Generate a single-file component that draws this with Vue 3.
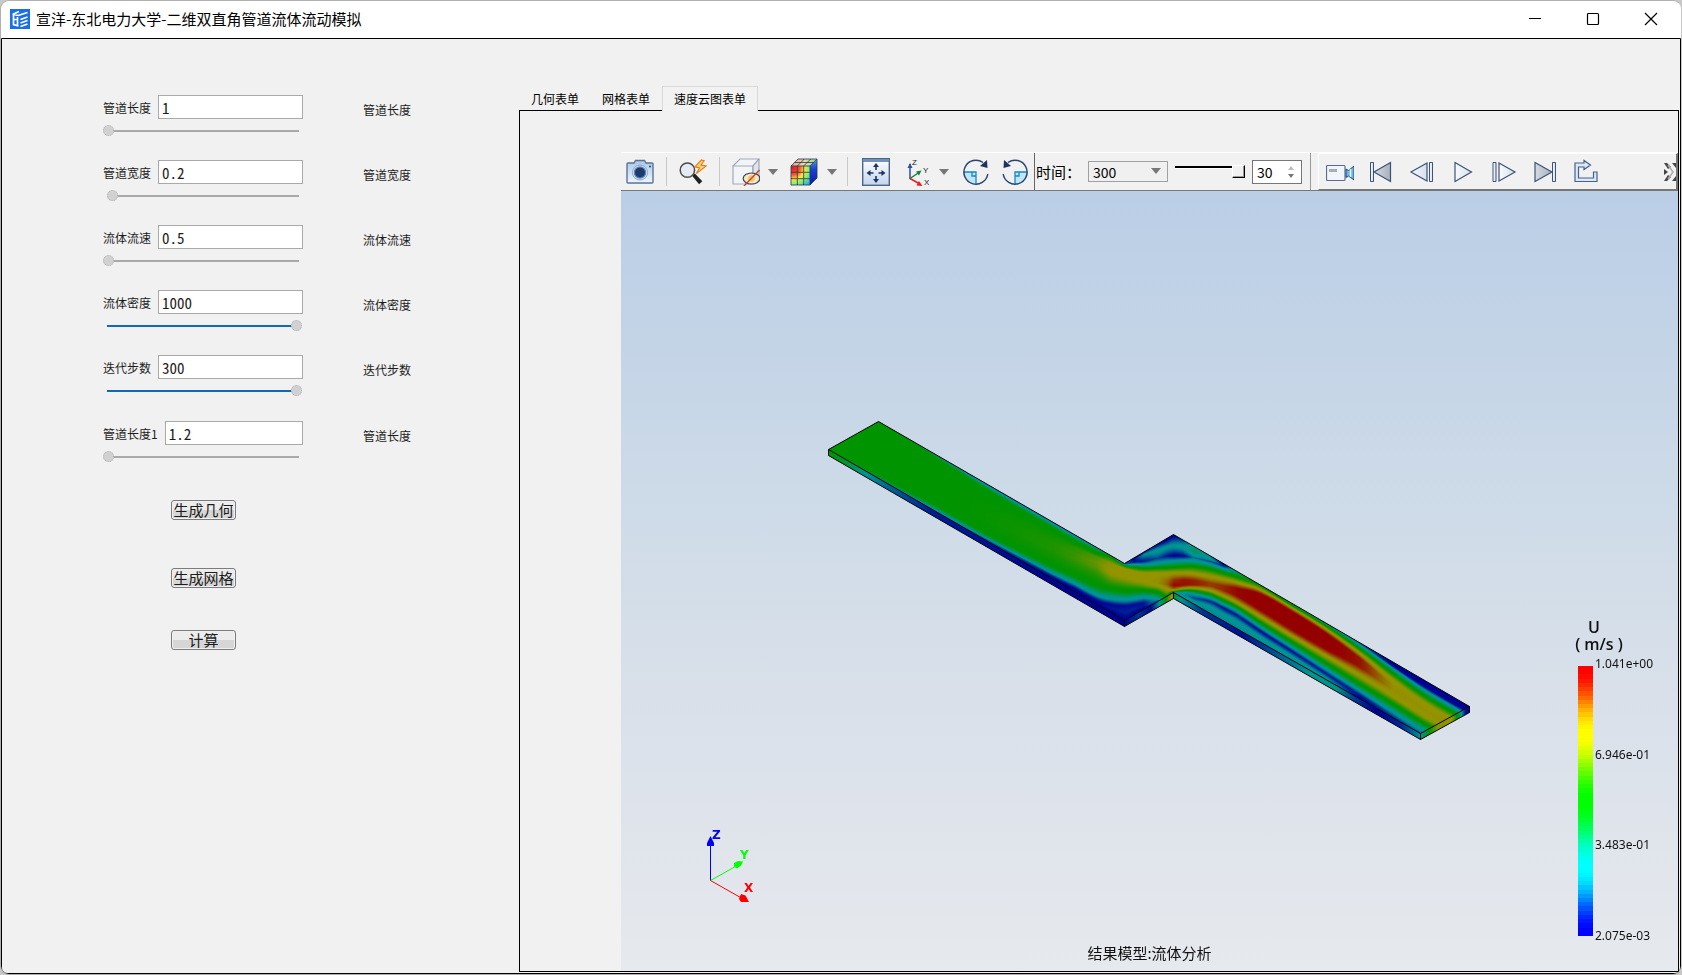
<script setup>
import { onMounted, ref } from 'vue'

const params = ref([
  { id: 'length', label: '管道长度', hint: '管道长度', value: '1', pos: 0 },
  { id: 'width', label: '管道宽度', hint: '管道宽度', value: '0.2', pos: 2 },
  { id: 'speed', label: '流体流速', hint: '流体流速', value: '0.5', pos: 0 },
  { id: 'density', label: '流体密度', hint: '流体密度', value: '1000', pos: 100 },
  { id: 'steps', label: '迭代步数', hint: '迭代步数', value: '300', pos: 100 },
  { id: 'length1', label: '管道长度1', hint: '管道长度', value: '1.2', pos: 0 },
])
const tabs = ['几何表单', '网格表单', '速度云图表单']
const activeTab = ref(2)
const time = ref('300')
const frame = ref('30')
const ticks = ['1.041e+00', '6.946e-01', '3.483e-01', '2.075e-03']

/* Rainbow scale: blue, cyan, green, yellow, red */
const scale = [[0, 0, 1], [0, 1, 1], [0, 1, 0], [1, 1, 0], [1, 0, 0]]
function colour(t, peak) {
  const p = Math.min(Math.max(t, 0), 1) * 4
  const i = Math.min(Math.floor(p), 3)
  const x = p - i
  const f = x * x * (3 - 2 * x)
  return scale[i].map((c, k) => Math.round((c + (scale[i + 1][k] - c) * f) * peak))
}
const bands = Array.from({ length: 64 }, (_, i) => ({ y: i, fill: `rgb(${colour(1 - i / 63, 255).join(',')})` }))

/* Velocity profiles across the duct: station, node positions, node levels */
const profiles = [
  [-844, [-381, -380, -379, -378, -370, -330, -300, -280, -250, -225, -218, -215, -213, -211], [.5, .5, .5, .5, .5, .5, .5, .5, .5, .5, .5, .5, .5, .49]],
  [-630, [-258, -257, -256, -255, -248, -200, -180, -150, -120, -103, -96, -92, -90, -88], [.48, .5, .5, .5, .5, .5, .5, .5, .5, .5, .42, .36, .34, .3]],
  [-520, [-195, -194, -192, -188, -182, -140, -110, -80, -60, -44, -35, -30, -27, -24], [.3, .32, .36, .45, .5, .5, .5, .5, .5, .5, .36, .28, .22, .2]],
  [-370, [-108, -105, -102, -97, -88, -50, -20, 0, 20, 40, 50, 54, 58, 62], [.22, .25, .3, .42, .5, .52, .53, .53, .52, .5, .35, .25, .15, .1]],
  [-170, [7, 10, 14, 18, 28, 50, 70, 90, 115, 138, 155, 163, 169, 177], [.2, .25, .3, .4, .5, .55, .57, .57, .54, .5, .32, .2, .08, 0]],
  [-110, [42, 44, 48, 52, 60, 80, 100, 115, 138, 165, 188, 199, 205, 212], [.22, .25, .3, .4, .5, .58, .6, .6, .56, .5, .25, .07, 0, 0]],
  [-40, [82, 84, 88, 92, 98, 110, 128, 142, 165, 195, 224, 239, 246, 252], [.25, .3, .4, .45, .5, .63, .66, .64, .57, .5, .25, .04, .02, 0]],
  [0, [105, 106, 107, 109, 113, 128, 145, 160, 180, 205, 234, 251, 263, 275], [.35, .4, .45, .5, .56, .7, .74, .72, .62, .5, .25, .04, .06, 0]],
  [43, [130, 131, 132, 133, 135, 145, 158, 170, 190, 211, 237, 256, 275, 300], [.15, .2, .25, .35, .5, .74, .76, .74, .62, .5, .25, .04, .08, 0]],
  [70, [114, 118, 125, 132, 140, 153, 164, 176, 194, 210, 235, 252, 266, 284], [.02, .04, .05, .25, .5, .74, .76, .75, .62, .5, .25, .04, .08, 0]],
  [100, [97, 103, 122, 133, 143, 158, 170, 182, 197, 209, 230, 246, 256, 267], [.1, .22, .06, .25, .5, .74, .76, .75, .64, .5, .25, .05, .06, 0]],
  [140, [73, 90, 114, 129, 142, 158, 175, 188, 199, 207, 222, 232, 238, 245], [.05, .26, .12, .25, .5, .75, .77, .78, .7, .6, .4, .3, .2, .1]],
  [170, [56, 80, 107, 124, 141, 158, 178, 192, 203, 212, 218, 221, 224, 227], [0, .25, .06, .25, .5, .75, .83, .85, .78, .7, .65, .6, .55, .5]],
  [190, [44, 76, 106, 122, 140, 157, 178, 195, 205, 210, 213, 215, 216, 217], [0, .25, .02, .25, .5, .75, .9, .96, .85, .7, .5, .3, .3, .3]],
  [220, [61, 80, 107, 120, 138, 157, 178, 194, 204, 210, 215, 221, 227, 233], [.12, .27, .04, .25, .5, .75, .94, .95, .75, .5, .25, .22, .25, .25]],
  [250, [79, 92, 112, 121, 137, 159, 180, 193, 203, 211, 219, 232, 244, 251], [.3, .36, .17, .25, .5, .75, .93, .93, .75, .5, .27, .12, .25, .2]],
  [300, [108, 116, 123, 131, 145, 168, 188, 197, 211, 222, 233, 243, 260, 279], [.2, .27, .12, .25, .5, .75, .89, .89, .75, .5, .25, .08, .25, .2]],
  [340, [131, 134, 138, 145, 157, 176, 196, 210, 227, 240, 252, 263, 282, 303], [.02, .05, .1, .25, .5, .75, .91, .92, .75, .5, .25, .05, .25, .2]],
  [380, [154, 155, 156, 158, 169, 186, 204, 226, 247, 260, 272, 285, 303, 326], [.3, .3, .33, .36, .5, .75, .97, .97, .75, .5, .25, .06, .25, .2]],
  [450, [194, 195, 196, 197, 200, 208, 222, 266, 289, 306, 320, 332, 350, 366], [.45, .5, .52, .55, .6, .75, 1, 1, .75, .5, .25, .04, .25, .22]],
  [550, [252, 253, 254, 255, 258, 265, 278, 328, 350, 368, 384, 396, 412, 424], [.35, .38, .42, .45, .5, .75, 1, 1, .75, .5, .25, .05, .25, .27]],
  [650, [310, 311, 312, 313, 318, 328, 342, 385, 408, 430, 448, 461, 474, 482], [.3, .32, .35, .4, .5, .75, 1, 1, .75, .5, .25, .06, .22, .27]],
  [750, [368, 370, 372, 376, 386, 400, 415, 440, 466, 492, 512, 524, 532, 539], [.1, .15, .2, .28, .5, .75, .94, .94, .75, .5, .25, .07, .03, .02]],
  [850, [425, 430, 438, 446, 460, 480, 497, 510, 528, 552, 575, 585, 590, 597], [0, 0, .03, .25, .5, .74, .78, .78, .75, .5, .25, .15, .1, .08]],
  [950, [483, 492, 503, 514, 530, 552, 566, 580, 592, 614, 636, 645, 650, 655], [0, 0, .03, .25, .5, .74, .77, .77, .74, .5, .25, .2, .15, .1]],
  [1078, [557, 568, 578, 588, 604, 624, 637, 647, 660, 680, 700, 710, 720, 730], [0, 0, .03, .25, .5, .74, .77, .77, .74, .5, .25, .2, .15, .1]],
]

function slope(i, part, k) {
  const a = profiles[Math.max(i - 1, 0)]
  const b = profiles[Math.min(i + 1, profiles.length - 1)]
  return (b[part][k] - a[part][k]) / (b[0] - a[0])
}

/* One column of the field at station u: smooth node positions and levels */
function column(u) {
  let i = 0
  while (i < profiles.length - 2 && profiles[i + 1][0] < u) i++
  const a = profiles[i]
  const b = profiles[i + 1]
  const h = b[0] - a[0]
  const f = Math.min(Math.max((u - a[0]) / h, 0), 1)
  const f2 = f * f
  const f3 = f2 * f
  const pos = a[1].map((p, k) =>
    (2 * f3 - 3 * f2 + 1) * p + (f3 - 2 * f2 + f) * h * slope(i, 1, k)
    + (3 * f2 - 2 * f3) * b[1][k] + (f3 - f2) * h * slope(i + 1, 1, k))
  const lev = a[2].map((l, k) => l + (b[2][k] - l) * f)
  return { pos, lev }
}

function level({ pos, lev }, v) {
  if (v <= pos[0]) return lev[0]
  for (let k = 1; k < pos.length; k++) {
    if (v <= pos[k]) return lev[k - 1] + (lev[k] - lev[k - 1]) * ((v - pos[k - 1]) / (pos[k] - pos[k - 1] || 1))
  }
  return lev[lev.length - 1]
}

const field = ref(null)
const A = [207, 258], B = [257, 230], C = [503, 372], D = [552, 343]
const E = [848, 515], F = [799, 542], G = [552, 401], H = [503, 429]
const depth = 6
const walls = [
  { from: A, to: H, stops: [[0, .5], [.06, .4], [.13, .25], [.2, .16], [.35, .07], [.55, .05], [.8, 0], [1, 0]] },
  { from: H, to: G, stops: [[0, 0], [.3, .1], [.55, .03], [.72, .25], [.86, .5], [.96, .75], [1, .72]] },
  { from: G, to: F, stops: [[0, .45], [.03, .27], [.12, .1], [.28, .05], [.42, .14], [.55, .25], [.66, .3], [.74, .1], [.82, 0], [.92, .08], [1, .22]] },
  { from: F, to: E, stops: [[0, .25], [.2, .48], [.35, .7], [.65, .74], [.75, .5], [.85, .25], [.93, .05], [1, .02]] },
]

function trace(ctx, points) {
  ctx.beginPath()
  points.forEach(([x, y], i) => (i ? ctx.lineTo(x + .5, y + .5) : ctx.moveTo(x + .5, y + .5)))
}

onMounted(() => {
  const ctx = field.value.getContext('2d')
  const face = document.createElement('canvas')
  face.width = 650
  face.height = 320
  const fctx = face.getContext('2d')
  const img = fctx.createImageData(650, 320)
  for (let x = 0; x < 650; x++) {
    const col = column((x + 205 - 489) * 3)
    for (let y = 0; y < 320; y++) {
      const [r, g, b] = colour(level(col, (y + 228 - 329) * 3), 148)
      img.data.set([r, g, b, 255], (y * 650 + x) * 4)
    }
  }
  fctx.putImageData(img, 0, 0)

  ctx.save()
  trace(ctx, [A, B, C, D, E, F, G, H])
  ctx.closePath()
  ctx.clip()
  ctx.drawImage(face, 205, 228)
  ctx.restore()

  ctx.lineWidth = 1
  ctx.strokeStyle = '#000'
  walls.forEach(({ from, to, stops }) => {
    const grad = ctx.createLinearGradient(from[0], 0, to[0], 0)
    stops.forEach(([p, t]) => grad.addColorStop(p, `rgb(${colour(t, 148).join(',')})`))
    trace(ctx, [from, to, [to[0], to[1] + depth], [from[0], from[1] + depth]])
    ctx.closePath()
    ctx.fillStyle = grad
    ctx.fill()
    ctx.stroke()
  })
  trace(ctx, [A, B, C, D, E])
  ctx.stroke()
})
</script>

<template>
  <div class="window">
    <header class="titlebar">
      <svg class="logo" viewBox="0 0 20 20" aria-hidden="true">
        <rect width="20" height="20" fill="#1a6fe8" />
        <path d="M2.500 5.500 9 2.500M3.500 5.500V15.500l5 1.500M7.500 8V17M3.500 10.500h4M8 6.500 17.500 3.500M8 6.500 4 5.500M10.500 10.500 17.500 8M10.500 14l7-2.500M10.500 17.500l7-2.500" fill="none" stroke="#fff" stroke-width="1.700" />
      </svg>
      <h1>宣洋-东北电力大学-二维双直角管道流体流动模拟</h1>
      <div class="winctl">
        <button aria-label="最小化"><svg viewBox="0 0 14 14"><path d="M1 6.500h12" stroke="#000" /></svg></button>
        <button aria-label="最大化"><svg viewBox="0 0 14 14"><rect x="1.500" y="1.500" width="11" height="11" rx="1" fill="none" stroke="#000" stroke-width="1.200" /></svg></button>
        <button aria-label="关闭"><svg viewBox="0 0 14 14"><path d="M1 1l12 12M13 1 1 13" stroke="#000" stroke-width="1.200" /></svg></button>
      </div>
    </header>

    <main class="content">
      <form class="form" @submit.prevent>
        <div v-for="p in params" :key="p.id" class="row">
          <div class="field">
            <div class="line">
              <label :for="p.id">{{ p.label }}</label>
              <input :id="p.id" v-model="p.value" type="text" class="num" />
            </div>
            <input v-model="p.pos" type="range" min="0" max="100" class="slider" :class="{ full: p.pos == 100 }" :aria-label="p.label" />
          </div>
          <span class="hint">{{ p.hint }}</span>
        </div>
        <div class="actions">
          <button type="button">生成几何</button>
          <button type="button" class="mesh">生成网格</button>
          <button type="button" class="calc">计算</button>
        </div>
      </form>

      <section class="results">
        <nav class="tabs" role="tablist">
          <button v-for="(t, i) in tabs" :key="t" role="tab" :aria-selected="i === activeTab" :class="{ active: i === activeTab }" @click="activeTab = i">{{ t }}</button>
        </nav>
        <div class="panel">
          <div class="toolbar">
            <button class="tool" aria-label="截图">
              <svg viewBox="0 0 28 28">
                <defs><linearGradient id="cam" x2="0" y2="1"><stop stop-color="#a9c6e6" /><stop offset="1" stop-color="#eef6ff" /></linearGradient></defs>
                <path d="M1 6q0-1 1-1h6l1.500-2.500h9L20 5h6q1 0 1 1v18q0 1-1 1H2q-1 0-1-1z" fill="url(#cam)" stroke="#5a7396" stroke-width="1.400" />
                <circle cx="14" cy="14.500" r="7.500" fill="#dbe9f7" stroke="#89a6c6" />
                <circle cx="14" cy="14.500" r="5.600" fill="#1d3b6d" stroke="#5e82ad" stroke-width="1.200" />
                <circle cx="24" cy="8.500" r="1" fill="#27466f" />
              </svg>
            </button>
            <i class="sep"></i>
            <button class="tool" aria-label="快速缩放">
              <svg viewBox="0 0 30 28">
                <path d="m14 18 3-2.500 8 8.500-3.500 3z" fill="#222" />
                <circle cx="9" cy="12" r="7.700" fill="#e6ebf2" stroke="#4a4a4a" stroke-width="1.600" />
                <path d="m24 1-7 7.500 5 1.200-3.500 6L29 7.500 23.500 6.500 27 2z" fill="#ffd27a" stroke="#e07b16" stroke-width="1.200" />
              </svg>
            </button>
            <i class="sep"></i>
            <button class="tool" aria-label="显示隐藏">
              <svg viewBox="0 0 28 28">
                <path d="M1 8 8 1h19l-6 7zM1 8h20v18H1z" fill="#f2f4f8" stroke="#a3a9b5" stroke-width="1.200" />
                <path d="m21 8 6-7v19l-6 6z" fill="#dfe3ea" stroke="#8e98aa" />
                <ellipse cx="19.500" cy="20.500" rx="8.300" ry="5.500" fill="#fbe6b8" stroke="#334266" stroke-width="1.200" />
                <circle cx="19.500" cy="20.500" r="3.300" fill="#e8c680" />
                <path d="M12 28 27.500 12" stroke="#c44122" stroke-width="1.300" />
              </svg>
            </button>
            <button class="drop" aria-label="显示选项"><svg viewBox="0 0 10 6"><path d="M0 0h10L5 6z" /></svg></button>
            <button class="tool cube" aria-label="云图">
              <svg viewBox="0 0 28 28">
                <defs>
                  <radialGradient id="heat" cx=".1" cy=".1" r="1.200"><stop stop-color="#e5201a" /><stop offset=".3" stop-color="#f5562b" /><stop offset=".5" stop-color="#ffe23a" /><stop offset=".7" stop-color="#8bf06a" /><stop offset="1" stop-color="#1ca8f0" /></radialGradient>
                  <linearGradient id="lid"><stop stop-color="#e89a8c" /><stop offset=".5" stop-color="#ead9a0" /><stop offset="1" stop-color="#8fdc8e" /></linearGradient>
                  <linearGradient id="flank" x2="0" y2="1"><stop stop-color="#54a7c0" /><stop offset=".4" stop-color="#1b40d8" /><stop offset="1" stop-color="#0b1aa0" /></linearGradient>
                </defs>
                <path d="M1 8 8 1h19l-7 7z" fill="url(#lid)" />
                <path d="M1 8h19v19H1z" fill="url(#heat)" />
                <path d="m20 8 7-7v19l-7 7z" fill="url(#flank)" />
                <path d="M1 8 8 1h19v19l-7 7H1zM1 8h19l7-7M20 8v19M7.300 8v19M13.700 8v19M1 14.300h19M1 20.700h19M7.300 8l7-7M13.700 8l7-7M4.500 4.500h19" fill="none" stroke="#24345c" stroke-width=".8" />
              </svg>
            </button>
            <button class="drop" aria-label="云图选项"><svg viewBox="0 0 10 6"><path d="M0 0h10L5 6z" /></svg></button>
            <i class="sep"></i>
            <button class="tool fit" aria-label="适应窗口">
              <svg viewBox="0 0 28 28">
                <defs><linearGradient id="fit" x2="0" y2="1"><stop stop-color="#fff" /><stop offset="1" stop-color="#c3d5ec" /></linearGradient></defs>
                <rect x=".7" y=".7" width="26.600" height="26.600" fill="url(#fit)" stroke="#4c658c" stroke-width="1.400" />
                <path d="M1 1h26v3H1z" fill="#7390b8" />
                <path d="M14 6.500v5.500M14 18v5.500M6.500 15h5M16.500 15h5" stroke="#1e3360" stroke-width="1.600" />
                <path d="m14 5-3 4h6zM14 25l-3-4h6zM4.500 15l4-3v6zM23.500 15l-4-3v6z" fill="#1e3360" />
              </svg>
            </button>
            <button class="tool axes" aria-label="坐标视图">
              <svg viewBox="0 0 28 28">
                <path d="M6 21V6" stroke="#2a4fa8" stroke-width="1.500" /><path d="M6 5 3.500 10h5z" fill="#2a4fa8" />
                <path d="m6 20.500 9-6" stroke="#128040" stroke-width="1.500" /><path d="m17.500 12.500-5.500 1 3 4z" fill="#128040" />
                <path d="m6 20.500 9 5" stroke="#e82020" stroke-width="1.500" /><path d="m18.500 28-6-.5 2.500-4.500z" fill="#e82020" />
                <text x="8" y="7" class="ax">Z</text><text x="19" y="15" class="ax">Y</text><text x="20" y="27" class="ax">X</text>
              </svg>
            </button>
            <button class="drop" aria-label="视图选项"><svg viewBox="0 0 10 6"><path d="M0 0h10L5 6z" /></svg></button>
            <button class="tool turn" aria-label="顺时针旋转">
              <svg viewBox="0 0 28 28">
                <path d="M2 14h12v12A12 12 0 0 1 2 14z" fill="#bfe6fa" /><path d="M2 14h12v12M10 14v4h4" fill="none" stroke="#1787c4" stroke-width="1.300" />
                <path d="M25.800 16A12 12 0 1 1 21 4.500" fill="none" stroke="#2b456f" stroke-width="1.500" /><path d="m25 2 .500 8-7.500-2z" fill="#1e3360" />
              </svg>
            </button>
            <button class="tool" aria-label="逆时针旋转">
              <svg viewBox="0 0 28 28">
                <path d="M26 14H14v12a12 12 0 0 0 12-12z" fill="#bfe6fa" /><path d="M26 14H14v12M18 14v4h-4" fill="none" stroke="#1787c4" stroke-width="1.300" />
                <path d="M2.200 16A12 12 0 1 0 7 4.500" fill="none" stroke="#2b456f" stroke-width="1.500" /><path d="m3 2-.500 8 7.500-2z" fill="#1e3360" />
              </svg>
            </button>

            <div class="timebox">
              <label for="time">时间：</label>
              <div class="combo">
                <select id="time" v-model="time"><option>300</option></select>
                <svg viewBox="0 0 10 6" aria-hidden="true"><path d="M0 0h10L5 6z" fill="#777" /></svg>
              </div>
              <input type="range" class="timeline" min="0" max="100" value="100" aria-label="时间滑块" />
              <div class="spin">
                <input v-model="frame" type="text" aria-label="帧数" />
                <div class="steps">
                  <button aria-label="增加"><svg viewBox="0 0 6 4"><path d="M0 4h6L3 0z" fill="#bbb" /></svg></button>
                  <button aria-label="减少"><svg viewBox="0 0 6 4"><path d="M0 0h6L3 4z" fill="#777" /></svg></button>
                </div>
              </div>
            </div>

            <div class="player">
              <svg class="defs" width="0" height="0" aria-hidden="true"><defs>
                <linearGradient id="pale"><stop stop-color="#f8fbff" /><stop offset="1" stop-color="#d5dfeb" /></linearGradient>
                <linearGradient id="steel"><stop stop-color="#d5dae2" /><stop offset="1" stop-color="#a9b1bd" /></linearGradient>
              </defs></svg>
              <button aria-label="录制"><svg viewBox="0 0 28 28">
                <rect x=".5" y="7.500" width="18.500" height="15" rx="1" fill="#f1f4f8" stroke="#5a6d8c" stroke-width="1.200" /><path d="M3 11h8v3H3z" fill="#a5adb9" />
                <path d="m20 11 2.500 1.500L28 8v14l-5.500-4-2.500 1.500z" fill="#6fb6e8" stroke="#1f4a78" /><path d="M24.500 11v8" stroke="#e4f4ff" stroke-width="1.500" />
              </svg></button>
              <button aria-label="第一帧"><svg viewBox="0 0 28 28"><path d="M3.500 4.500h3v19h-3z" fill="url(#pale)" stroke="#3c5276" /><path d="M23.500 4.500v19L7 14z" fill="url(#steel)" stroke="#3c5276" stroke-width="1.200" /></svg></button>
              <button aria-label="后退"><svg viewBox="0 0 28 28"><path d="M21.500 4.500h3v19h-3z" fill="url(#pale)" stroke="#3c5276" /><path d="M19 5v18L3 14z" fill="url(#pale)" stroke="#3c5276" stroke-width="1.200" /></svg></button>
              <button aria-label="播放"><svg viewBox="0 0 28 28"><path d="M6 4.500v19L22.500 14z" fill="url(#pale)" stroke="#3c5276" stroke-width="1.200" /></svg></button>
              <button aria-label="前进"><svg viewBox="0 0 28 28"><path d="M3 4.500h3v19H3z" fill="url(#pale)" stroke="#3c5276" /><path d="M9 5v18l16-9z" fill="url(#pale)" stroke="#3c5276" stroke-width="1.200" /></svg></button>
              <button aria-label="最后帧"><svg viewBox="0 0 28 28"><path d="M21.500 4.500h3v19h-3z" fill="url(#pale)" stroke="#3c5276" /><path d="M4 4.500v19L21 14z" fill="url(#steel)" stroke="#3c5276" stroke-width="1.200" /></svg></button>
              <button aria-label="导出"><svg viewBox="0 0 28 28"><path d="M3 5h9V2.500L18.500 7 12 11.500V9H6.500v11h15v-6H25v9.500H3z" fill="#dbe8f5" stroke="#46618b" stroke-width="1.200" /></svg></button>
              <button class="more" aria-label="更多"><svg viewBox="0 0 12 18"><path d="M0 0h3l4 4-3 2zM0 18h3l4-4-3-2zM8 0h4v5zM8 18h4v-5zM0 6l4 3-4 3z" fill="#444" /><path d="m4 2 5 7-5 7" fill="none" stroke="#aaa" stroke-width="1.500" /></svg></button>
            </div>
          </div>

          <div class="scene">
            <canvas ref="field" width="1057" height="780" aria-label="速度云图"></canvas>
            <svg class="triad" viewBox="0 0 60 80" aria-hidden="true">
              <path d="M10.500 54.500V16" stroke="#00f" /><path d="M10.500 10 14 17v3H7v-3z" fill="#00f" />
              <path d="m10.500 54.500 25-14" stroke="#0f0" /><path d="m34 37 4-2 5 .5-2 4-4 3-3-2z" fill="#0f0" />
              <path d="m10.500 54.500 30 17" stroke="red" /><path d="m41 68 4.500 1.500L49 76h-8l-2-3z" fill="red" />
              <text x="12" y="13" fill="#00f">Z</text><text x="40" y="33" fill="#0f0">Y</text><text x="44" y="66" fill="red">X</text>
            </svg>
            <div class="legend">
              <p class="unit">U</p>
              <p class="unit scale">( m/s )</p>
              <div class="bar">
                <svg viewBox="0 0 15 64" preserveAspectRatio="none" shape-rendering="crispEdges" aria-hidden="true"><rect v-for="b in bands" :key="b.y" :y="b.y" width="15" height="1" :fill="b.fill" /></svg>
                <ul><li v-for="t in ticks" :key="t">{{ t }}</li></ul>
              </div>
            </div>
            <p class="caption">结果模型:流体分析</p>
          </div>
        </div>
      </section>
    </main>
  </div>
</template>

<style>
html, body { margin: 0; background: #c8c8c8; }
</style>

<style scoped>
* { box-sizing: border-box; }
button, input, select { font: inherit; color: inherit; margin: 0; }
button { border: 0; padding: 0; background: none; }
p, ul, h1 { margin: 0; padding: 0; }
.window {
  display: flex; flex-direction: column; height: 100vh; min-height: 800px;
  border: 1px solid #b0b0b0; border-right-color: #c8c8c8; border-radius: 9px; overflow: hidden; background: #fff;
  font: 12px "Noto Sans CJK SC", sans-serif; color: #1c1c1c;
}
.titlebar { display: flex; align-items: center; height: 37px; flex: none; padding: 0 1px 1px 9px; color: #000; }
.logo { width: 20px; height: 20px; }
h1 { margin-left: 6px; font-size: 15px; font-weight: 400; line-height: 20px; }
.winctl { display: flex; margin-left: auto; height: 100%; }
.winctl button { width: 58px; display: grid; place-items: center; }
.winctl svg { width: 14px; height: 14px; }
.content { flex: 1; min-height: 0; display: flex; border: 1px solid #000; border-radius: 0 0 6px 6px; background: #f1f1f1; }

.form { flex: none; width: 517px; padding: 56px 0 0 101px; }
.row { display: flex; height: 65px; }
.row:nth-of-type(6) { margin-top: 1px; }
.field { width: 200px; }
.line { display: flex; align-items: center; gap: 7px; height: 24px; }
.line label { flex: none; }
.num {
  flex: 1; min-width: 0; height: 24px; padding: 1px 3px 0; border: 1px solid #a9a9a9; border-radius: 0;
  background: #fff; color: #1c1c1c; font-size: 15px; line-height: 21px; font-feature-settings: "hwid";
}
.slider { -webkit-appearance: none; appearance: none; display: block; width: 199px; height: 12px; margin-top: 6px; background: none; }
.slider::-webkit-slider-runnable-track {
  height: 12px; background: linear-gradient(#a9a9a9, #a9a9a9) 4px 5px / calc(100% - 7px) 2px no-repeat;
}
.slider.full::-webkit-slider-runnable-track { background-image: linear-gradient(#0f68ba, #0f68ba); }
.slider::-webkit-slider-thumb { -webkit-appearance: none; width: 11px; height: 11px; border-radius: 50%; border: 1px dotted #b0b0b0; background: #d1d1d1; }
.hint { margin-left: 60px; line-height: 30px; }
.actions { display: flex; flex-direction: column; align-items: flex-start; padding: 14px 0 0 68px; }
.actions button {
  width: 65px; height: 20px; border: 1px solid #7c7c7c; border-radius: 3px; font-size: 15px; line-height: 18px;
  background: linear-gradient(#ececec 50%, #d6d6d6 50%); white-space: nowrap; box-shadow: inset 0 0 0 1px #f0f0f0;
}
.actions .mesh { margin-top: 48px; }
.actions .calc { margin-top: 42px; }

.results { flex: 1; min-width: 0; display: flex; flex-direction: column; padding: 47px 1px 1px 0; }
.tabs { display: flex; gap: 1px; height: 25px; margin-bottom: -1px; position: relative; color: #000; }
.tabs button { padding: 1px 11px 0; height: 25px; line-height: 24px; }
.tabs button:first-child { padding-left: 12px; }
.tabs .active { padding-top: 0; border: 1px solid #d9d9d9; border-bottom: 0; background: #f2f2f2; }
.panel { flex: 1; min-height: 0; display: flex; flex-direction: column; padding: 41px 0 0 101px; border: 1px solid #000; }

.toolbar { display: flex; align-items: stretch; height: 39px; flex: none; border-top: 1px solid #fff; border-bottom: 1px solid #777; }
.toolbar button { display: grid; place-items: center; flex: none; }
.tool { width: 38px; }
.toolbar .cube { width: 43px; padding-left: 2px; }
.tool.fit { width: 42px; }
.toolbar .axes { width: 39px; padding-left: 2px; }
.tool.turn { margin-left: 4px; width: 40px; }
.tool svg { width: 28px; height: 28px; }
.ax { font: 8px "Liberation Sans", sans-serif; fill: #222; }
.sep { flex: none; width: 15px; margin: 4px 0; background: linear-gradient(#c8c8c8, #c8c8c8) center / 1px 100% no-repeat; }
.drop { width: 16px; }
.drop svg { width: 10px; height: 6px; fill: #777; }
.timebox { display: flex; align-items: center; flex: none; gap: 7px; width: 277px; padding-left: 1px; border-left: 1px solid #666; border-right: 1px solid #999; color: #000; }
.timebox label { width: 45px; font-size: 15px; white-space: nowrap; }
.combo { position: relative; width: 80px; height: 21px; }
.combo select { -webkit-appearance: none; appearance: none; display: block; width: 100%; height: 21px; padding: 0 4px; border: 1px solid #a0a0a0; border-radius: 0; background: #f0f0f0; font-size: 14px; line-height: 18px; }
.combo svg { position: absolute; right: 7px; top: 7px; width: 10px; height: 6px; pointer-events: none; }
.timeline { -webkit-appearance: none; appearance: none; width: 70px; height: 14px; background: none; }
.timeline::-webkit-slider-runnable-track { height: 14px; background: linear-gradient(#000 2px, #fff 2px) 0 1px / calc(100% - 12px) 3px no-repeat; }
.timeline::-webkit-slider-thumb { -webkit-appearance: none; width: 13px; height: 13px; border: 1px solid; border-color: #fff #000 #000 #fff; background: #f1f1f1; box-shadow: inset -1px -1px #999; }
.spin { display: flex; width: 50px; height: 24px; border: 1px solid #777; background: #fff; }
.spin input { flex: 1; min-width: 0; padding: 0 0 0 4px; border: 0; background: none; font-size: 14px; }
.steps { display: flex; flex-direction: column; justify-content: center; gap: 4px; width: 20px; }
.steps svg { width: 6px; height: 4px; display: block; }
.player { flex: 1; min-width: 0; display: flex; margin-left: 7px; border: 1px solid #fff; border-right: 2px solid #777; border-bottom: 1px solid #777; }
.defs { position: absolute; }
.player button { width: 41px; }
.player svg { width: 28px; height: 28px; }
.player .more { width: 13px; margin-left: auto; }
.player .more svg { width: 12px; height: 18px; }

.scene { position: relative; flex: 1; min-height: 0; background: linear-gradient(#bacee6, #d0dce8 45%, #d9e0ea 65%, #e6e9ed); color: #111; }
.scene canvas { position: absolute; width: 100%; height: 100%; object-fit: contain; }
.triad { position: absolute; left: 79px; bottom: 65px; width: 60px; height: 80px; font: bold 12px "DejaVu Sans", sans-serif; }
.legend { position: absolute; right: 16px; bottom: 35px; width: 104px; font-family: "Noto Sans", sans-serif; }
.unit { width: 72px; font-family: "Open Sans", sans-serif; font-size: 16px; font-weight: 600; line-height: 17px; text-align: center; }
.unit.scale { width: 82px; }
.bar { display: flex; height: 270px; margin: 13px 0 0 20px; }
.bar svg { width: 15px; height: 100%; flex: none; }
.bar ul { display: flex; flex-direction: column; justify-content: space-between; list-style: none; margin: -9px 0 -7px 2px; line-height: 14px; }
.caption { position: absolute; left: 0; right: 0; bottom: 7px; text-align: center; font-size: 15px; line-height: 22px; }
</style>
